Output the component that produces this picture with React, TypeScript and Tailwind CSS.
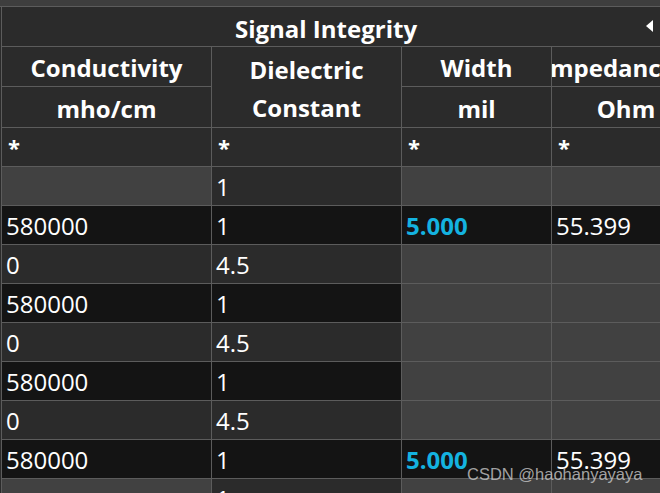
import React from "react";

type Cell = { v?: string; bg: "gray" | "mid" | "dark"; cyan?: boolean };

const BG: Record<Cell["bg"], string> = {
  gray: "bg-[#414141]",
  mid: "bg-[#2b2b2b]",
  dark: "bg-[#141414]",
};

const ROWS: Cell[][] = [
  [{ bg: "gray" }, { v: "1", bg: "mid" }, { bg: "gray" }, { bg: "gray" }],
  [{ v: "580000", bg: "dark" }, { v: "1", bg: "dark" }, { v: "5.000", bg: "dark", cyan: true }, { v: "55.399", bg: "dark" }],
  [{ v: "0", bg: "mid" }, { v: "4.5", bg: "mid" }, { bg: "gray" }, { bg: "gray" }],
  [{ v: "580000", bg: "dark" }, { v: "1", bg: "dark" }, { bg: "gray" }, { bg: "gray" }],
  [{ v: "0", bg: "mid" }, { v: "4.5", bg: "mid" }, { bg: "gray" }, { bg: "gray" }],
  [{ v: "580000", bg: "dark" }, { v: "1", bg: "dark" }, { bg: "gray" }, { bg: "gray" }],
  [{ v: "0", bg: "mid" }, { v: "4.5", bg: "mid" }, { bg: "gray" }, { bg: "gray" }],
  [{ v: "580000", bg: "dark" }, { v: "1", bg: "dark" }, { v: "5.000", bg: "dark", cyan: true }, { v: "55.399", bg: "dark" }],
  [{ bg: "gray" }, { v: "1", bg: "mid" }, { bg: "gray" }, { bg: "gray" }],
];

const head = "bg-[#2b2b2b] flex items-center justify-center pt-[3px] font-bold text-[24px] text-white whitespace-nowrap overflow-hidden";
const star = "bg-[#2b2b2b] flex items-center pl-[6px] font-bold text-[22px] text-white";

export default function App() {
  return (
    <div
      className="relative w-[660px] h-[493px] overflow-hidden bg-[#2b2b2b]"
      style={{ fontFamily: '"Open Sans", "Noto Sans", sans-serif' }}
    >
      {/* top strip */}
      <div className="h-[6px] bg-[#3e3e3e] border-b border-[#5c5c5c] box-content" />

      <div className="pl-px">
        <div className="border-l border-[#5c5c5c]">
          {/* title bar */}
          <div className="h-[40px] flex items-center border-b border-[#5c5c5c] box-border">
            <div className="flex-1 text-center font-bold text-[24px] text-white pt-[4px] pl-[4px]">Signal Integrity</div>
            <svg width="7" height="12" viewBox="0 0 7 12" className="mr-[7px] mb-[2px]">
              <path d="M7 0 L0 6 L7 12 Z" fill="#ffffff" />
            </svg>
          </div>

          <div className="grid grid-cols-[209px_189px_149px_148px] gap-px bg-[#5c5c5c] w-[698px]">
            {/* header row 1 */}
            <div className={`${head} h-[39px]`}>Conductivity</div>
            <div className={`${head} row-span-2 flex-col leading-[38px]`}>
              <span>Dielectric</span>
              <span>Constant</span>
            </div>
            <div className={`${head} h-[39px]`}>Width</div>
            <div className={`${head} h-[39px] !justify-start`}>
              <span className="-ml-[10px]">Impedance</span>
            </div>
            {/* header row 2 */}
            <div className={`${head} h-[40px]`}>mho/cm</div>
            <div className={`${head} h-[40px]`}>mil</div>
            <div className={`${head} h-[40px]`}>Ohm</div>
            {/* filter row */}
            <div className={`${star} h-[38px]`}>*</div>
            <div className={`${star} h-[38px]`}>*</div>
            <div className={`${star} h-[38px]`}>*</div>
            <div className={`${star} h-[38px]`}>*</div>

            {ROWS.map((row, i) =>
              row.map((c, j) => (
                <div
                  key={`${i}-${j}`}
                  className={`${BG[c.bg]} h-[38px] flex items-center pl-[4px] pt-[2px] text-[24px] ${
                    c.cyan ? "text-[#14b3e0] font-bold" : "text-white"
                  }`}
                >
                  {c.v}
                </div>
              ))
            )}
          </div>
        </div>
      </div>

      {/* watermark */}
      <div
        className="absolute left-[467px] top-[462px] text-[16.5px] text-[#c8c8c8]/80 whitespace-nowrap"
        style={{ fontFamily: '"Liberation Sans", Arial, sans-serif' }}
      >
        CSDN @haohanyayaya
      </div>
    </div>
  );
}
